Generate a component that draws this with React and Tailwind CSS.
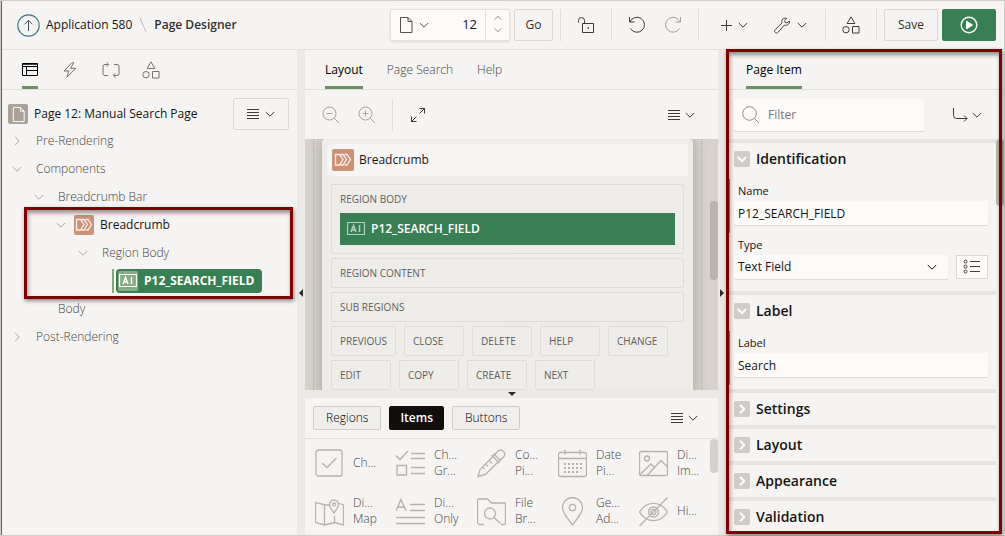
import React from "react";
import clsx from "clsx";

const Icon = ({ size = 18, box = 18, className, children }) => (
  <svg
    width={size}
    height={size}
    viewBox={`0 0 ${box} ${box}`}
    fill="none"
    stroke="currentColor"
    strokeWidth="1"
    className={clsx("shrink-0", className)}
    aria-hidden="true"
  >
    {children}
  </svg>
);

const Chevron = ({ className, size = 10 }) => (
  <Icon size={size} box={10} className={className}>
    <path d="M.8 3l4.2 4.2L9.200 3" />
  </Icon>
);

const ChevronRight = ({ className }) => (
  <Icon size={10} box={10} className={className}>
    <path d="M3 .8L7.200 5 3 9.200" />
  </Icon>
);

const Lines = () => (
  <Icon size={12} box={12}>
    <path d="M0 1.500h12M0 4.500h12M0 7.500h12M0 10.500h12" />
  </Icon>
);

const PageGlyph = ({ size = 18 }) => (
  <Icon size={size}>
    <path d="M3.500 1.500h7.500l4 4v11h-11.500zM11 1.500v4h4" />
  </Icon>
);

const Shapes = () => (
  <Icon>
    <path d="M9 .9l3.900 6.600H5.100zM10.500 10.500h6.500v6.500h-6.500z" />
    <circle cx="4" cy="13.700" r="3.200" />
  </Icon>
);

const BreadcrumbBadge = ({ className }) => (
  <span
    className={clsx(
      "flex size-5 shrink-0 items-center justify-center rounded-xs bg-[#cb9278] text-[#fbefe8]",
      className
    )}
  >
    <Icon size={18}>
      <path
        d="M1.500 3.500h4l3.500 5-3.500 5.500h-4zM6.500 3.500h2.500l3.500 5-3.500 5.500H6.500M10.500 3.500h2.500l3.500 5-3.500 5.500h-2.500"
        strokeWidth="1.300"
      />
    </Icon>
  </span>
);

const TextFieldGlyph = () => (
  <Icon size={18}>
    <path d="M.5 2.500h17v12H.5z" strokeWidth="1.200" />
    <path d="M4 12l2.500-6.500L9 12M5 10h3M12.500 5v7" strokeWidth="1.500" />
  </Icon>
);

const Divider = ({ className }) => (
  <span className={clsx("h-8 w-px bg-[#dfdcd8]", className)} />
);

const ToolButton = ({ label, wide, className, children }) => (
  <button
    aria-label={label}
    className={clsx(
      "flex h-8 items-center justify-center gap-1.5 text-[#3f3b38]",
      wide ? "w-14" : "w-9",
      className
    )}
  >
    {children}
  </button>
);

const Header = () => (
  <header className="flex h-[49px] shrink-0 items-center border-b border-[#e2dfdb] pr-2 pl-[15px]">
    <nav className="flex items-center text-xs">
      <a href="#app" className="flex items-center gap-[6px] whitespace-nowrap">
        <Icon size={23} box={23} className="text-[#3d7d84]">
          <circle cx="11.500" cy="11.500" r="10.700" strokeWidth="1.200" />
          <path d="M11.500 17V6.500M7.500 10.300l4-4 4 4" className="text-[#35525a]" />
        </Icon>
        Application 580
      </a>
      <Icon size={14} box={14} className="mx-1 text-[#bdb9b4]">
        <path d="M4 0l6 14" />
      </Icon>
      <h1 className="font-semibold whitespace-nowrap text-[#33302e]">Page Designer</h1>
    </nav>

    <div className="ml-auto flex items-center">
      <div className="flex h-8 w-[120px] items-center rounded-xs border border-[#e4e1dd] bg-[#fcfbfa] shadow-sm">
        <button aria-label="Select page" className="flex items-center gap-1 pl-[6px] text-[#55514e]">
          <PageGlyph />
          <Chevron />
        </button>
        <input
          aria-label="Page number"
          defaultValue="12"
          className="w-0 min-w-0 flex-1 pr-2 text-right text-[13px] outline-none"
        />
        <div className="flex h-full w-6 flex-col items-center justify-between border-l border-[#e4e1dd] py-1 text-[#7b7773]">
          <button aria-label="Next page">
            <Chevron size={8} className="rotate-180" />
          </button>
          <button aria-label="Previous page" className="flex h-3 items-center">
            <Chevron size={8} />
          </button>
        </div>
      </div>
      <button className="ml-1 h-8 w-[39px] rounded-xs border border-[#dbd8d4] text-xs text-[#33302e]">Go</button>
      <Divider className="mx-[7px]" />
      <ToolButton label="Unlock page">
        <Icon>
          <path d="M5.500 7.500h11v9h-11zM7.500 7.500V4.500a3 3 0 0 0-6 0v2" />
          <path d="M10.500 12h1.500" strokeWidth="1.500" />
        </Icon>
      </ToolButton>
      <Divider className="mx-[7px]" />
      <ToolButton label="Undo">
        <Icon>
          <path d="M1.500 1v5H6.500M2 6A7.500 7.500 0 1 1 2.500 12.500" />
        </Icon>
      </ToolButton>
      <ToolButton label="Redo" className="text-[#a5a19d]">
        <Icon>
          <path d="M16.500 1v5H11.500M16 6A7.500 7.500 0 1 0 15.500 12.500" />
        </Icon>
      </ToolButton>
      <Divider className="mx-[7px]" />
      <ToolButton label="Create" wide>
        <Icon size={11} box={11}>
          <path d="M5.500 0v11M0 5.500h11" />
        </Icon>
        <Chevron />
      </ToolButton>
      <ToolButton label="Utilities" wide>
        <Icon size={17}>
          <path d="M16.400 4.200l-2.600 2-2-.3-.5-2 2.200-2.500c-2-.9-4.600.1-5.200 2.200-.3 1-.1 1.800.2 2.700L1.300 13.500c-.9.9-.9 2 0 2.900.8.9 2.100.8 2.900-.1l6.700-7.700c2.800 1 5.900-1.200 5.500-4.400z" />
        </Icon>
        <Chevron />
      </ToolButton>
      <Divider className="mx-[7px]" />
      <ToolButton label="Shared components">
        <Shapes />
      </ToolButton>
      <Divider className="mx-[7px]" />
      <button className="h-8 w-[54px] rounded-xs border border-[#dbd8d4] text-xs text-[#33302e]">Save</button>
      <button
        aria-label="Save and run page"
        className="ml-1 flex h-8 w-[54px] items-center justify-center rounded-xs bg-[#387f53] text-white"
      >
        <Icon>
          <circle cx="9" cy="9" r="7.800" strokeWidth="1.400" />
          <path d="M6.500 5.200v7.600l6-3.800z" fill="currentColor" />
        </Icon>
      </button>
    </div>
  </header>
);

const leftTabs = [
  {
    label: "Rendering",
    icon: (
      <Icon size={16} box={16}>
        <path d="M.5 1.500h15v12H.5zM.5 4.500h15M4.500 4.500v9M4.500 8.500h11" />
        <path d="M.5 2h15" strokeWidth="1.500" />
      </Icon>
    ),
  },
  {
    label: "Dynamic actions",
    icon: (
      <Icon size={16} box={16}>
        <path d="M9.800.8L2.200 9h4.600L5 15.200 13.800 6.300H8.600l3.200-5.500z" />
      </Icon>
    ),
  },
  {
    label: "Processing",
    icon: (
      <Icon>
        <path d="M6 3.500H3a2 2 0 0 0-2 2v7a2 2 0 0 0 2 2h3M4.500 1.200L6.800 3.500 4.500 5.800M12 3.500h3a2 2 0 0 1 2 2v7a2 2 0 0 1-2 2h-3M13.500 12.200l-2.300 2.300 2.300 2.300" />
      </Icon>
    ),
  },
  { label: "Shared components", icon: <Shapes /> },
];

const TreeRow = ({ open, indent, children }) => (
  <li className={clsx("flex h-7 items-center text-[#474340]", indent)}>
    <span className="flex w-6 shrink-0 text-[#a9a5a1]">
      {open === true && <Chevron />}
      {open === false && <ChevronRight />}
    </span>
    {children}
  </li>
);

const TreePane = () => (
  <section className="flex w-[295px] shrink-0 flex-col">
    <div className="flex h-10 shrink-0 border-b border-[#e2dfdb] pl-3">
      {leftTabs.map((tab, i) => (
        <button
          key={tab.label}
          aria-label={tab.label}
          className="flex w-10 justify-start pl-2"
        >
          <span
            className={clsx(
              "flex h-full items-center border-b-[3px] pt-1",
              i === 0 ? "border-[#6b9465] text-black" : "border-transparent text-[#76726f]"
            )}
          >
            {tab.icon}
          </span>
        </button>
      ))}
    </div>

    <div className="pt-2 pr-2 pl-[6px] text-xs">
      <div className="flex h-8 items-center">
        <span className="mr-[6px] flex size-5 items-center justify-center rounded-xs bg-[#aaa298] text-white">
          <PageGlyph size={17} />
        </span>
        <span className="whitespace-nowrap">Page 12: Manual Search Page</span>
        <button
          aria-label="Tree menu"
          className="ml-auto flex h-8 w-14 items-center justify-center gap-[6px] rounded-xs border border-[#dbd8d4] text-[#3f3b38]"
        >
          <Lines />
          <Chevron />
        </button>
      </div>
      <ul className="-mt-[3px] font-light">
        <TreeRow open={false} indent="pl-1">Pre-Rendering</TreeRow>
        <TreeRow open indent="pl-1">Components</TreeRow>
        <TreeRow open indent="pl-[26px]">Breadcrumb Bar</TreeRow>
        <li className="flex h-7 items-center pl-12">
          <Chevron className="mr-2 text-[#a9a5a1]" />
          <BreadcrumbBadge className="mr-[6px]" />
          <span className="font-normal">Breadcrumb</span>
        </li>
        <TreeRow open indent="pl-[70px]">Region Body</TreeRow>
        <li className="flex h-7 items-center pl-[104px]">
          <span className="mr-[2px] h-6 w-[2px] bg-[#84a97e]" />
          <span className="flex h-6 items-center gap-[6px] rounded-sm bg-[#387f53] pr-2 pl-[2px] font-bold text-white">
            <span className="flex size-5 items-center justify-center rounded-xs bg-[#86ae86]">
              <TextFieldGlyph />
            </span>
            P12_SEARCH_FIELD
          </span>
        </li>
        <TreeRow indent="pl-[26px]">Body</TreeRow>
        <TreeRow open={false} indent="pl-1">Post-Rendering</TreeRow>
      </ul>
    </div>
  </section>
);

const slotRows = [
  ["Previous", "Close", "Delete", "Help", "Change"],
  ["Edit", "Copy", "Create", "Next"],
];

const slotBox = "rounded-xs border border-dotted border-[#cfccc7] px-2 text-[10px] uppercase";

const Canvas = () => (
  <div className="relative flex min-h-0 flex-1 overflow-hidden bg-[#d7d2cd] pr-4 pl-2">
    <div className="flex flex-1 border-x border-dotted border-[#b9b3ad] px-2">
      <div className="h-fit flex-1 rounded-t-sm bg-[#edece8] p-[5px] pb-5 shadow-[0_0_14px_rgba(60,50,40,0.3)]">
        <div className="flex h-8 items-center gap-[5px] rounded-sm bg-[#f6f5f3] px-[5px] text-xs">
          <BreadcrumbBadge className="size-[22px]" />
          Breadcrumb
        </div>
        <div className="flex flex-col gap-1 px-1 pt-2 text-[#625e5b]">
          <div className={clsx(slotBox, "h-[70px] pt-[6px]")}>
            <div className="leading-4">Region Body</div>
            <div className="mt-[6px] flex h-8 items-center gap-[6px] bg-[#387f53] pl-[7px] text-xs text-white normal-case">
              <span className="text-[#b5d0bd]">
                <TextFieldGlyph />
              </span>
              <span className="font-semibold">P12_SEARCH_FIELD</span>
            </div>
          </div>
          <div className={clsx(slotBox, "flex h-[30px] items-center")}>Region Content</div>
          <div className={clsx(slotBox, "flex h-[30px] items-center")}>Sub Regions</div>
          {slotRows.map((row) => (
            <div key={row[0]} className="flex gap-2">
              {row.map((name) => (
                <div key={name} className={clsx(slotBox, "flex h-[30px] min-w-[60px] items-center")}>
                  {name}
                </div>
              ))}
            </div>
          ))}
        </div>
      </div>
    </div>
    <span className="absolute top-[62px] right-0 h-[79px] w-2 rounded-full bg-[#b9b4af]" />
  </div>
);

const galleryItems = [
  {
    label: ["Ch..."],
    icon: (
      <>
        <rect x="1" y="1" width="26" height="26" rx="2.500" />
        <path d="M7 14l5 4.500 9.500-9.500" />
      </>
    ),
  },
  {
    label: ["Ch...", "Gr..."],
    icon: <path d="M0 6.500l4 4L12 2M15 4.500h14M15 9.500h14M1 16.500h9.500v9.500H1zM15 18.500h14M15 24.500h14" />,
  },
  {
    label: ["Co...", "Pi..."],
    icon: (
      <path d="M1 27.500l2-7L15 8.500l5.500-6c4-4 9.500 1.500 6 5.500l-6 5.500L8.500 25.500zM14.500 6l8 8M16.500 4.500L24 12M12 11.500l3 3M8.500 15l2.500 2.500M5.500 18l2 2" />
    ),
  },
  {
    label: ["Date", "Pi..."],
    icon: (
      <>
        <rect x="0.500" y="3.500" width="28" height="24" rx="2" />
        <path d="M.5 9.500h28M7 .5v5M22 .5v5" />
        <path d="M6 15h19M6 19h19M6 23h15" strokeWidth="2" strokeDasharray="2 2" />
      </>
    ),
  },
  {
    label: ["Di...", "Im..."],
    icon: (
      <>
        <rect x="0.500" y="2.500" width="28" height="24" rx="1.500" />
        <circle cx="8" cy="9.500" r="2.500" />
        <path d="M1 25.500L12 15l4 4M8.500 26L22 11.500l6.500 6.500" />
      </>
    ),
  },
  {
    label: ["Di...", "Map"],
    icon: (
      <>
        <path d="M14 8H11L.5 5.500v20L9.500 28l10-2.500L28.500 28V8l-4.500-1.500M9.500 8v20M19.500 19v6.500" />
        <path d="M19 16c-3-4-4.500-6-4.500-8.500a4.500 4.500 0 0 1 9 0c0 2.500-1.500 4.500-4.500 8.500z" />
        <circle cx="19" cy="7.500" r="1.500" />
      </>
    ),
  },
  {
    label: ["Di...", "Only"],
    icon: <path d="M0 14L5 2.500 10 14M2 10h6M14 7.500h15M14 13.500h15M0 20.500h29M0 26.500h29" />,
  },
  {
    label: ["File", "Br..."],
    icon: (
      <>
        <path d="M7 27.500H3A2.500 2.500 0 0 1 .5 25V3.500A1.500 1.500 0 0 1 2 2h8.500l4 4H28.500v20a1.500 1.500 0 0 1-1.500 1.500h-3" />
        <circle cx="13" cy="16.500" r="5.500" />
        <path d="M17 20.500l6.500 6" />
      </>
    ),
  },
  {
    label: ["Ge...", "Ad..."],
    icon: (
      <>
        <path d="M14.500 28C7.500 18.500 4.500 14.500 4.500 10.500a10 10 0 0 1 20 0c0 4-3 8-10 17.500z" />
        <circle cx="14.500" cy="10.500" r="3.200" />
      </>
    ),
  },
  {
    label: ["Hi..."],
    icon: (
      <>
        <path d="M.5 15C8 3.500 21 3.500 28.500 15 21 26.500 8 26.500.5 15zM.5 29L28.500.5" />
        <circle cx="14.500" cy="15" r="5" />
        <circle cx="14.500" cy="15" r="2.500" />
      </>
    ),
  },
];

const galleryTab = "h-6 rounded-xs border px-3 text-xs";

const Gallery = () => (
  <div className="flex h-[137px] shrink-0 flex-col">
    <div className="flex h-[41px] shrink-0 items-center gap-2 border-b border-[#e2dfdb] pr-5 pl-2">
      <button className={clsx(galleryTab, "border-[#cfccc8] bg-[#f0eeec] font-light text-black")}>Regions</button>
      <button className={clsx(galleryTab, "border-[#100f0e] bg-[#100f0e] px-[10px] font-semibold text-white")}>Items</button>
      <button className={clsx(galleryTab, "border-[#cfccc8] bg-[#f0eeec] font-light text-black")}>Buttons</button>
      <button aria-label="Gallery menu" className="ml-auto flex items-center gap-[5px] text-[#3f3b38]">
        <Lines />
        <Chevron />
      </button>
    </div>
    <div className="relative min-h-0 flex-1 overflow-hidden pr-2">
      <ul className="grid grid-cols-5">
        {galleryItems.map((item, i) => (
          <li key={i} className="flex h-12 items-center gap-[9px] pl-[10px] text-xs leading-4 font-light text-[#474340]">
            <Icon size={29} box={29} className="stroke-[1.3] text-[#b7b2ad]">
              {item.icon}
            </Icon>
            <span>
              {item.label.map((line) => (
                <span key={line} className="block">
                  {line}
                </span>
              ))}
            </span>
          </li>
        ))}
      </ul>
      <span className="absolute top-0 right-0 h-[34px] w-2 rounded-full bg-[#d3d0cd]" />
    </div>
  </div>
);

const centerTabs = ["Layout", "Page Search", "Help"];

const tabClass = "h-full border-b-[3px] pt-1 text-xs whitespace-nowrap";

const CenterPane = () => (
  <section className="flex min-w-0 flex-1 flex-col">
    <div className="flex h-10 shrink-0 gap-6 border-b border-[#e2dfdb] pl-5">
      {centerTabs.map((name, i) => (
        <button
          key={name}
          className={clsx(tabClass, i === 0 ? "border-[#6b9465] text-black" : "border-transparent font-light text-[#474340]")}
        >
          {name}
        </button>
      ))}
    </div>
    <div className="flex h-[49px] shrink-0 items-center pr-[23px] pl-2 text-[#3f3b38]">
      <ToolButton label="Zoom out" className="text-[#a5a19d]">
        <Icon>
          <circle cx="7.500" cy="7.500" r="6.500" />
          <path d="M12.200 12.200L17 17M4.500 7.500h6" />
        </Icon>
      </ToolButton>
      <ToolButton label="Zoom in" className="text-[#a5a19d]">
        <Icon>
          <circle cx="7.500" cy="7.500" r="6.500" />
          <path d="M12.200 12.200L17 17M4.500 7.500h6M7.500 4.500v6" />
        </Icon>
      </ToolButton>
      <Divider className="mx-[7px]" />
      <ToolButton label="Expand">
        <Icon size={16} box={16}>
          <path d="M9.500 1.500H14.500V6.500M14.500 1.500L9.500 6.500M1.500 9.500V14.500H6.500M1.500 14.500l5-5" />
        </Icon>
      </ToolButton>
      <button aria-label="Layout menu" className="ml-auto flex items-center gap-[5px]">
        <Lines />
        <Chevron />
      </button>
    </div>
    <Canvas />
    <div className="flex h-2 shrink-0 items-center justify-center bg-[#ece8e5]">
      <span className="border-x-4 border-t-4 border-transparent border-t-[#2d2a28]" />
    </div>
    <Gallery />
  </section>
);

const Splitter = ({ children }) => (
  <div className="flex w-2 shrink-0 items-center justify-center bg-[#ece8e5]">{children}</div>
);

const Group = ({ title, open, children }) => (
  <section className="border-t-4 border-[#e7e3e0]">
    <h2>
      <button className="flex h-8 w-full items-center gap-[6px] pl-[5px] text-left text-sm font-semibold">
        <span className="flex size-4 items-center justify-center rounded-xs bg-[#cfccc7] text-white">
          {open ? <Chevron className="stroke-2" /> : <ChevronRight className="stroke-2" />}
        </span>
        {title}
      </button>
    </h2>
    {open && <div className="py-1">{children}</div>}
  </section>
);

const Field = ({ id, label, changed, children }) => (
  <div
    className={clsx(
      "border-l pt-1 pr-2 pb-2 pl-1 text-xs",
      changed ? "border-[#8b8783]" : "border-transparent"
    )}
  >
    <label htmlFor={id} className="mb-[2px] block pl-1 text-[11px] leading-4">
      {label}
    </label>
    {children}
  </div>
);

const fieldBox = "h-6 rounded-xs bg-[#fcfbfa] px-1 shadow-[0_1px_1px_rgba(0,0,0,0.12)] outline-none";

const PropertyPane = () => (
  <section className="relative flex w-[278px] shrink-0 flex-col">
    <div className="flex h-10 shrink-0 border-b border-[#e2dfdb] pl-5">
      <button className={clsx(tabClass, "border-[#6b9465] text-black")}>Page Item</button>
    </div>
    <div className="flex h-[49px] shrink-0 items-center justify-between pr-[22px] pl-2">
      <label className="flex h-8 w-[190px] items-center gap-2 rounded-xs bg-[#fcfbfa] px-2 text-[#8f8b87] shadow-[0_1px_1px_rgba(0,0,0,0.12)]">
        <Icon>
          <circle cx="7.500" cy="7.500" r="6.800" />
          <path d="M12.400 12.400L17 17" />
        </Icon>
        <input
          aria-label="Filter"
          placeholder="Filter"
          className="w-full min-w-0 text-xs outline-none placeholder:text-[#7b7773]"
        />
      </label>
      <button aria-label="Go to group" className="flex items-center gap-1 text-[#3f3b38]">
        <Icon size={16} box={16}>
          <path d="M1.500 1v7.500a3 3 0 0 0 3 3h10.500M12 8.500l3 3-3 3" />
        </Icon>
        <Chevron />
      </button>
    </div>
    <div className="relative min-h-0 flex-1 overflow-hidden pr-2 pl-[3px]">
      <Group title="Identification" open>
        <Field id="name" label="Name" changed>
          <input id="name" defaultValue="P12_SEARCH_FIELD" className={clsx(fieldBox, "w-full")} />
        </Field>
        <Field id="type" label="Type">
          <div className="flex gap-2">
            <div className="relative flex-1">
              <select id="type" className={clsx(fieldBox, "w-full appearance-none")}>
                <option>Text Field</option>
              </select>
              <Chevron className="pointer-events-none absolute top-[7px] right-[11px]" />
            </div>
            <button
              aria-label="Quick pick"
              className="flex h-6 w-8 items-center justify-center border border-[#dbd8d4] bg-[#fcfbfa] text-[#3f3b38]"
            >
              <Icon>
                <path d="M7 3.500h10M7 8.500h10M7 13.500h10" />
                <circle cx="2.500" cy="3.500" r="1.500" />
                <circle cx="2.500" cy="8.500" r="1.500" />
                <circle cx="2.500" cy="13.500" r="1.500" />
              </Icon>
            </button>
          </div>
        </Field>
      </Group>
      <Group title="Label" open>
        <Field id="label" label="Label" changed>
          <input id="label" defaultValue="Search" className={clsx(fieldBox, "w-full")} />
        </Field>
      </Group>
      <Group title="Settings" />
      <Group title="Layout" />
      <Group title="Appearance" />
      <Group title="Validation" />
      <span className="absolute top-0 right-0 h-[67px] w-2 rounded-full bg-[#bab6b2]" />
    </div>
    <Highlight className="-top-px right-[2px] bottom-px left-0" />
  </section>
);

const Highlight = ({ className }) => (
  <div
    className={clsx(
      "pointer-events-none absolute border-[3px] border-[#800000] shadow-[1px_2px_4px_rgba(0,0,0,0.45),inset_1px_3px_4px_rgba(0,0,0,0.4)]",
      className
    )}
  />
);

export default function App() {
  return (
    <div className="flex h-screen border border-[#cfcdcb] bg-[#f5f4f2] font-['Open_Sans','Noto_Sans',sans-serif] text-[#161513]">
      <div className="relative flex min-w-0 flex-1 flex-col border-l border-[#3b7050]">
        <Header />
        <main className="flex min-h-0 flex-1">
          <TreePane />
          <Splitter>
            <span className="border-y-4 border-r-4 border-transparent border-r-[#2d2a28]" />
          </Splitter>
          <CenterPane />
          <Splitter>
            <span className="border-y-4 border-l-4 border-transparent border-l-[#2d2a28]" />
          </Splitter>
          <PropertyPane />
        </main>
        <Highlight className="top-[206px] left-[22px] h-[92px] w-[269px]" />
      </div>
    </div>
  );
}
